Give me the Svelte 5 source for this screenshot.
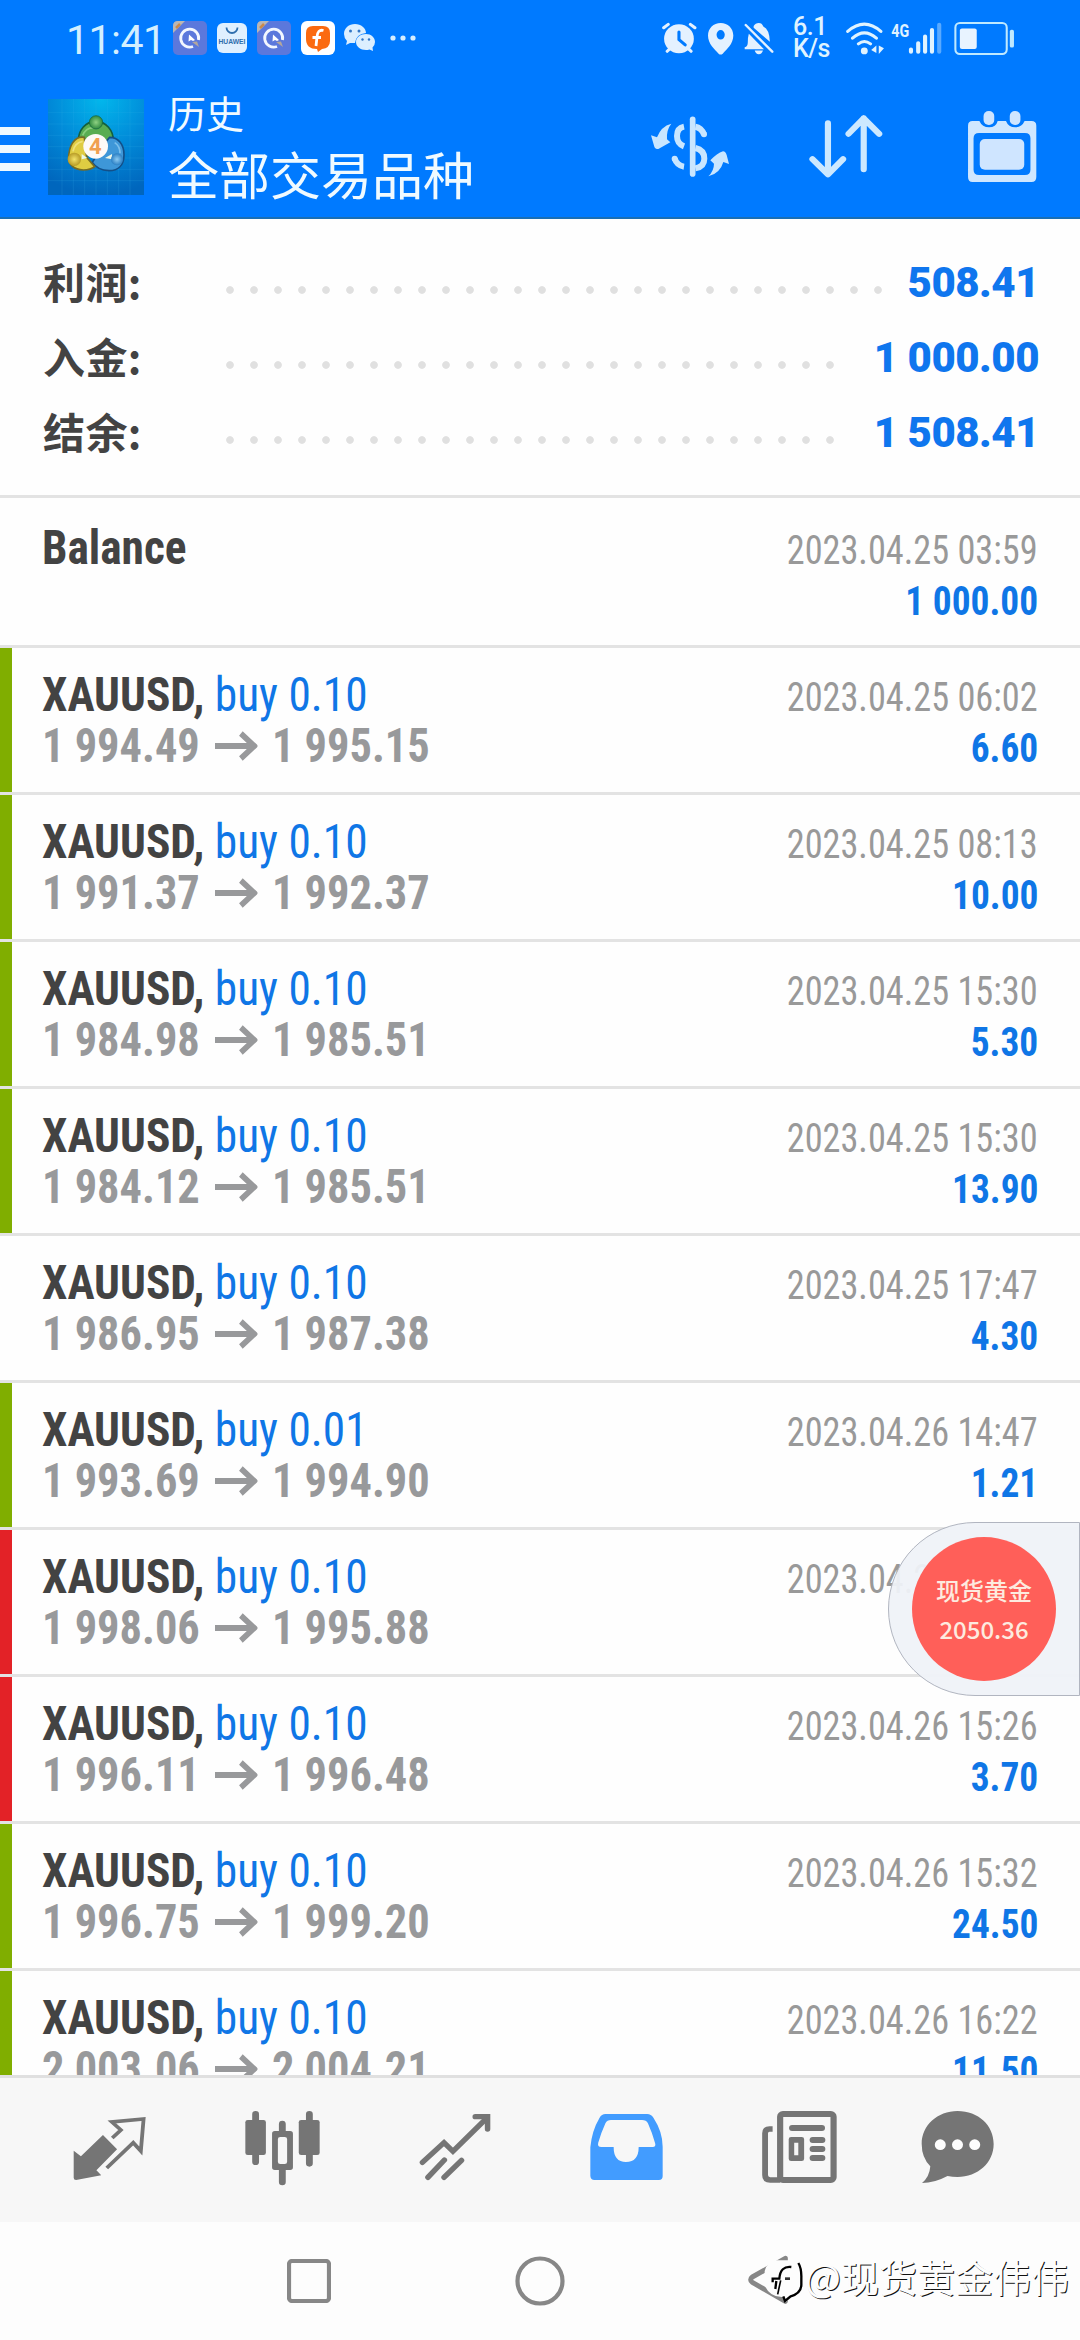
<script lang="ts">
  type Deal = { open: string; close: string; lot: string; time: string; profit: string; mark: string };

  const summary = [
    { label: '利润', value: '508.41', dots: 28 },
    { label: '入金', value: '1 000.00', dots: 26 },
    { label: '结余', value: '1 508.41', dots: 26 },
  ];

  const deals: Deal[] = [
    { open: '1 994.49', close: '1 995.15', lot: '0.10', time: '2023.04.25 06:02', profit: '6.60', mark: 'green' },
    { open: '1 991.37', close: '1 992.37', lot: '0.10', time: '2023.04.25 08:13', profit: '10.00', mark: 'green' },
    { open: '1 984.98', close: '1 985.51', lot: '0.10', time: '2023.04.25 15:30', profit: '5.30', mark: 'green' },
    { open: '1 984.12', close: '1 985.51', lot: '0.10', time: '2023.04.25 15:30', profit: '13.90', mark: 'green' },
    { open: '1 986.95', close: '1 987.38', lot: '0.10', time: '2023.04.25 17:47', profit: '4.30', mark: 'none' },
    { open: '1 993.69', close: '1 994.90', lot: '0.01', time: '2023.04.26 14:47', profit: '1.21', mark: 'green' },
    { open: '1 998.06', close: '1 995.88', lot: '0.10', time: '2023.04.26 15:24', profit: '', mark: 'red' },
    { open: '1 996.11', close: '1 996.48', lot: '0.10', time: '2023.04.26 15:26', profit: '3.70', mark: 'red' },
    { open: '1 996.75', close: '1 999.20', lot: '0.10', time: '2023.04.26 15:32', profit: '24.50', mark: 'green' },
    { open: '2 003.06', close: '2 004.21', lot: '0.10', time: '2023.04.26 16:22', profit: '11.50', mark: 'green' },
  ];
</script>

{#snippet rocketApp()}
  <svg class="app" width="34" height="34" viewBox="0 0 34 34">
    <rect width="34" height="34" rx="5" fill="#5b78dc" />
    <path d="M0 12V5Q0 0 5 0H12Z" fill="#b9b6b4" />
    <path d="M3 7L7 3" stroke="#c98a4b" stroke-width="2.5" />
    <path d="M20 25.5A9 9 0 1 1 25.500 19" fill="none" stroke="#f2f7ff" stroke-width="2.800" />
    <path d="M16 13.500L22 19L20 20L18 19L15.500 20.500Z" fill="#fff" />
    <path d="M19 21L24 20.500L26 26Z" fill="#b3a69c" />
  </svg>
{/snippet}

<div class="screen">
  <header>
    <div class="statusbar">
      <span class="clock">11:41</span>
      {@render rocketApp()}
      <svg class="app" width="30" height="30" viewBox="0 0 30 30">
        <rect width="30" height="30" rx="6" fill="#dff0ff" />
        <path d="M9.500 4.500A5.500 5.500 0 0 0 20.500 4.500" fill="none" stroke="#2f6fae" stroke-width="1.800" />
        <text x="15" y="20.500" text-anchor="middle" textLength="27" lengthAdjust="spacingAndGlyphs" class="brand">HUAWEI</text>
      </svg>
      {@render rocketApp()}
      <svg class="app" width="34" height="34" viewBox="0 0 34 34">
        <rect width="34" height="34" rx="6" fill="#fff" />
        <path d="M12 5H22Q29 5 29 12V20Q29 27 21 28L17 31L16 28Q5 28 5 18V12Q5 5 12 5Z" fill="#fb6a10" />
        <path d="M22.500 9.500Q16.500 8 16 16L15 25M11.500 16.500H20" fill="none" stroke="#fff" stroke-width="2.800" />
      </svg>
      <svg class="chat" width="32" height="28" viewBox="0 0 32 28">
        <path d="M11 0C17 0 22 4 22 9Q12 10 11 19L6 19L2 21L3 17Q0 14 0 10C0 4 5 0 11 0Z" fill="#dcefff" />
        <path d="M22 10C27 10 31 13.500 31 18Q31 21 28.500 23.500L29 27L25.500 25.500Q23.500 26 22 26C16.500 26 12 22.500 12 18C12 13.500 16.500 10 22 10Z" fill="#dcefff" />
        <g fill="#3477c4">
          <circle cx="6.500" cy="7" r="1.500" /><circle cx="15" cy="7" r="1.500" />
          <circle cx="18.500" cy="15.500" r="1.200" /><circle cx="25" cy="15.500" r="1.200" />
        </g>
      </svg>
      <svg class="more" width="26" height="6" viewBox="0 0 26 6" fill="#d6eeff">
        <circle cx="3" cy="3" r="2.600" /><circle cx="13" cy="3" r="2.600" /><circle cx="23" cy="3" r="2.600" />
      </svg>

      <svg class="alarm" width="36" height="33" viewBox="351 63 104 98" preserveAspectRatio="none">
        <circle cx="400" cy="113" r="43" fill="#e4f1ff" />
        <path d="M356 80L369 70M446 80L433 70M366 150L374 142M435 150L427 142" stroke="#e4f1ff" stroke-width="9" stroke-linecap="round" />
        <path d="M400 93V115L418 131" fill="none" stroke="#007aff" stroke-width="9" stroke-linecap="round" />
      </svg>
      <svg class="pin" width="26" height="33" viewBox="484 63 76 98" preserveAspectRatio="none">
        <path d="M521 66C542 66 558 82 558 103C558 128 538 145 527 157Q521 162 515 157C504 145 484 128 484 103C484 82 500 66 521 66ZM521 87A12 14 0 1 0 521 115A12 14 0 1 0 521 87Z" fill="#e4f1ff" fill-rule="evenodd" />
      </svg>
      <svg class="bell" width="30" height="33" viewBox="593 63 87 98" preserveAspectRatio="none" fill="#e4f1ff">
        <path d="M621 75Q626 66 636 66Q645 66 649 76Q667 84 668 122L621 80Z" />
        <path d="M607 98L651 144H595V138Q604 136 604 124Q604 108 607 98ZM624 148H648Q645 159 636 159Q627 159 624 148Z" />
        <path d="M598 72L675 151" stroke="#e4f1ff" stroke-width="7" stroke-linecap="round" />
      </svg>
      <div class="speed"><span>6.1</span><span>K/s</span></div>
      <svg class="wifi" width="39" height="34" viewBox="888 60 113 101" preserveAspectRatio="none">
        <g fill="none" stroke="#e0f3ff" stroke-width="9" stroke-linecap="round">
          <path d="M893 91Q941 48 989 91M907 111Q941 80 976 111M924 128Q941 114 959 128" />
        </g>
        <circle cx="941" cy="149" r="10" fill="#e0f3ff" />
        <path d="M961 146L976 133V155ZM983 133L998 141L983 158Z" fill="#e0f3ff" />
      </svg>
      <svg class="signal" width="52" height="34" viewBox="1019 60 151 101" preserveAspectRatio="none">
        <text x="1020" y="107" textLength="52" lengthAdjust="spacingAndGlyphs" class="net">4G</text>
        <g stroke="#e0f3ff" stroke-width="12" stroke-linecap="round">
          <path d="M1077 145V151M1098 126V151M1118 106V151M1138 87V151" />
          <path d="M1159 71V151" opacity=".4" />
        </g>
      </svg>
      <svg class="battery" width="61" height="34" viewBox="1200 60 177 101" preserveAspectRatio="none">
        <rect x="1204" y="66" width="149" height="92" rx="13" fill="none" stroke="#bfe9ff" stroke-width="6" />
        <rect x="1217" y="82" width="49" height="61" rx="6" fill="#e8f3ff" />
        <rect x="1362" y="86" width="12" height="53" rx="5" fill="#bfe9ff" />
      </svg>
    </div>

    <div class="toolbar">
      <svg class="menu" width="30" height="44" viewBox="0 0 30 44" fill="#eef9ff">
        <rect width="30" height="8" /><rect y="18" width="30" height="8" /><rect y="36" width="30" height="8" />
      </svg>
      <svg class="logo" width="96" height="96" viewBox="12 15 288 288">
        <defs>
          <radialGradient id="sky" cx=".55" cy="0" r="1">
            <stop offset="0" stop-color="#02b7ec" />
            <stop offset=".5" stop-color="#018bd9" />
            <stop offset="1" stop-color="#0066bd" />
          </radialGradient>
          <radialGradient id="gold"><stop offset="0" stop-color="#f3e36a" /><stop offset="1" stop-color="#b79a25" /></radialGradient>
          <radialGradient id="leaf"><stop offset="0" stop-color="#8fd183" /><stop offset="1" stop-color="#2f8a3f" /></radialGradient>
          <radialGradient id="sea"><stop offset="0" stop-color="#8ccbf2" /><stop offset="1" stop-color="#2b7fc4" /></radialGradient>
        </defs>
        <rect x="12" y="15" width="288" height="288" fill="url(#sky)" />
        <path d="M54 15V303M88 15V303M122 15V303M156 15V303M190 15V303M224 15V303M258 15V303M12 56H300M12 90H300M12 124H300M12 158H300M12 192H300M12 226H300M12 260H300" stroke="#3db4ee" stroke-opacity=".25" stroke-width="2" />
        <g stroke-width="5">
          <path d="M155 82C187 82 208 110 208 140Q208 165 190 185H120Q103 162 103 140C103 110 124 82 155 82Z" fill="#58ad52" stroke="#14603f" />
          <path d="M197 130C222 130 240 150 240 182C240 214 222 230 195 230Q160 228 145 205L180 150Z" fill="#3e97d8" stroke="#134f88" />
          <path d="M121 130Q100 126 86 146Q74 165 74 192C74 214 92 226 118 228Q140 228 152 218L128 190Z" fill="#dfcc42" stroke="#766c25" />
        </g>
        <g fill="none" stroke-width="5" stroke-opacity=".6">
          <path d="M116 124Q128 98 150 102" stroke="#a9e39a" />
          <path d="M212 146Q228 156 228 178" stroke="#a4d8f8" />
          <path d="M87 172Q92 146 116 142" stroke="#f9f0a0" />
        </g>
        <path d="M113 180L130 192L113 196ZM183 192L204 180V196Z" fill="#eaf6e8" />
        <circle cx="156" cy="85" r="20" fill="url(#leaf)" stroke="#14603f" stroke-width="2" />
        <circle cx="91" cy="196" r="20" fill="url(#gold)" />
        <circle cx="219" cy="196" r="18" fill="url(#sea)" />
        <circle cx="155" cy="157" r="37" fill="#fdfaf7" />
        <text x="154" y="181" text-anchor="middle" class="four">4</text>
      </svg>
      <div class="titles">
        <span class="section">历史</span>
        <span class="symbols">全部交易品种</span>
      </div>
      <svg class="currency" width="80" height="64" viewBox="30 40 240 192" fill="#c9e6ff">
        <path d="M94 66Q79 84 81 113L91 122L55 142Q45 142 43 135L33 101L51 107Q63 74 94 66Z" />
        <path d="M205 224Q222 207 222 186L211 176Q231 155 249 149Q257 150 260 160L267 187L250 181Q240 216 205 224Z" />
        <g fill="none" stroke="#c9e6ff" stroke-width="18">
          <path d="M132 75Q111 79 111 103Q111 126 132 134" />
          <path d="M166 139Q193 145 193 171Q193 195 166 200" />
        </g>
        <path d="M132 195Q111 192 104 171M166 75Q184 78 192 98" fill="none" stroke="#c9e6ff" stroke-width="18" />
        <circle cx="104" cy="171" r="9" /><circle cx="192" cy="98" r="9" />
        <path d="M158 53V217" stroke="#c9e6ff" stroke-width="17" stroke-linecap="round" />
      </svg>
      <svg class="sort" width="76" height="66" viewBox="779 343 221 197" preserveAspectRatio="none">
        <path d="M837 371V520M792 478L837 523L881 478M941 508V356M897 402L941 356L986 402" fill="none" stroke="#cce8ff" stroke-width="18" stroke-linecap="round" stroke-linejoin="round" />
      </svg>
      <svg class="calendar" width="70" height="73" viewBox="1240 329 203 219" preserveAspectRatio="none">
        <path d="M1256 362H1276Q1284 381 1304 381Q1324 381 1329 362H1353Q1360 381 1380 381Q1399 381 1407 362H1427Q1441 362 1441 376V530Q1441 545 1427 545H1256Q1243 545 1243 530V376Q1243 362 1256 362ZM1275 398Q1259 398 1259 414V508Q1259 524 1275 524H1408Q1424 524 1424 508V414Q1424 398 1408 398Z" fill="#cfe7ff" fill-rule="evenodd" />
        <rect x="1277" y="416" width="129" height="92" rx="15" fill="#cfe5ff" />
        <rect x="1285" y="329" width="37" height="50" rx="18" fill="#007aff" />
        <rect x="1361" y="329" width="37" height="50" rx="18" fill="#007aff" />
        <rect x="1288" y="332" width="31" height="42" rx="15" fill="#cfe5ff" />
        <rect x="1364" y="332" width="31" height="42" rx="15" fill="#cfe5ff" />
      </svg>
    </div>
  </header>

  <main>
    <section class="summary">
      {#each summary as item}
        <div class="total">
          <span class="label">{item.label}:</span>
          <i class="leader" style="width: {item.dots * 24}px"></i>
          <strong>{item.value}</strong>
        </div>
      {/each}
    </section>

    <div class="row balance">
      <div class="left"><span class="symbol"><b>Balance</b></span></div>
      <div class="right">
        <span class="time">2023.04.25 03:59</span>
        <span class="profit">1 000.00</span>
      </div>
    </div>

    {#each deals as deal}
      <div class="row {deal.mark}">
        <div class="left">
          <span class="symbol"><b>XAUUSD,</b> <em>buy {deal.lot}</em></span>
          <span class="prices">
            {deal.open}
            <svg width="46" height="30" viewBox="0 0 46 30"><path d="M0 15H42M28 2.500L42.500 15L28 27.500" fill="none" stroke="#98999b" stroke-width="6" /></svg>
            {deal.close}
          </span>
        </div>
        <div class="right">
          <span class="time">{deal.time}</span>
          <span class="profit">{deal.profit}</span>
        </div>
      </div>
    {/each}
  </main>

  <nav class="tabs">
    <svg width="73" height="76" viewBox="213 150 212 228" preserveAspectRatio="none">
      <path d="M300 225L341 268L281 331L295 346L222 360Q215 360 215 353V272L236 289Z" fill="#757575" />
      <path d="M327 234L352 210L326 186L418 177L410 273L388 248L311 324" fill="none" stroke="#757575" stroke-width="11" />
    </svg>
    <svg width="75" height="76" viewBox="708 150 219 228" preserveAspectRatio="none" fill="#757575">
      <path d="M739 163V305M896 163V310M817 192V220M817 325V366" stroke="#757575" stroke-width="20" stroke-linecap="round" />
      <rect x="709" y="180" width="60" height="105" rx="7" /><rect x="865" y="180" width="61" height="105" rx="7" />
      <path d="M795 213H840Q848 213 848 221V322Q848 330 840 330H795Q787 330 787 322V221Q787 213 795 213ZM811 231Q804 231 804 238V305Q804 312 811 312H824Q831 312 831 305V238Q831 231 824 231Z" fill-rule="evenodd" />
    </svg>
    <svg width="72" height="76" viewBox="1212 150 210 228" preserveAspectRatio="none" fill="none" stroke="#757575" stroke-linecap="round">
      <path d="M1222 307L1285 248L1311 274L1408 176M1238 352L1286 300M1285 352L1336 301" stroke-width="16" stroke-linejoin="miter" />
      <path d="M1376 170H1412V207" stroke-width="16" />
    </svg>
    <svg width="73" height="76" viewBox="145 150 213 228" preserveAspectRatio="none">
      <path d="M190 162H312Q323 162 330 173Q357 215 357 260V349Q357 360 346 360H158Q147 360 146 348V262Q150 213 173 173Q179 162 190 162ZM206 180Q195 180 190 190Q178 217 169 248Q166 261 178 261H214Q214 306 250 306Q287 306 287 261H328Q338 261 335 250Q326 217 314 190Q309 180 297 180Z" fill="#429cff" fill-rule="evenodd" />
    </svg>
    <svg width="75" height="76" viewBox="646 150 219 228" preserveAspectRatio="none">
      <rect x="699" y="162" width="156" height="198" rx="8" fill="none" stroke="#757575" stroke-width="18" />
      <path d="M677 207H668Q655 207 655 220V345Q655 360 670 360H699" fill="none" stroke="#757575" stroke-width="17" />
      <g fill="#757575">
        <rect x="725" y="195" width="105" height="18" rx="9" />
        <path d="M731 231H762Q769 231 769 238V296Q769 303 762 303H731Q724 303 724 296V238Q724 231 731 231ZM740 248V286H752V248Z" fill-rule="evenodd" />
        <rect x="785" y="231" width="46" height="18" rx="9" /><rect x="785" y="258" width="46" height="18" rx="9" /><rect x="785" y="285" width="46" height="18" rx="9" />
      </g>
    </svg>
    <svg class="messages" width="73" height="76" viewBox="1107 150 212 228" preserveAspectRatio="none">
      <path d="M1213 153C1274 153 1318 196 1318 252C1318 308 1272 351 1213 351Q1198 351 1184 348Q1146 369 1110 369Q1132 350 1134 319Q1109 293 1109 252C1109 196 1155 153 1213 153Z" fill="#757575" />
      <g fill="#fdfdfd"><circle cx="1163" cy="254" r="16" /><circle cx="1213" cy="254" r="16" /><circle cx="1263" cy="254" r="16" /></g>
    </svg>
  </nav>

  <footer>
    <svg width="44" height="44" viewBox="0 0 44 44"><rect x="2" y="2" width="40" height="40" rx="3" fill="none" stroke="#878787" stroke-width="4.200" /></svg>
    <svg class="home" width="50" height="50" viewBox="0 0 50 50"><circle cx="25" cy="25" r="22.500" fill="none" stroke="#878787" stroke-width="4.200" /></svg>
    <svg class="back" width="56" height="60" viewBox="20 45 168 180">
      <path d="M135 58L36 114Q26 122 36 130L135 187Z" fill="none" stroke="#878787" stroke-width="15" stroke-linejoin="round" />
      <path d="M108 64H162Q186 72 186 100V135Q184 165 152 176L136 190L128 174Q90 176 73 140V96Q82 66 108 64Z" fill="#fdfdfd" />
      <path d="M174 72Q184 88 183 118V138Q182 163 151 172L134 186L129 172" fill="none" stroke="#000" stroke-width="7" />
      <path d="M153 84Q120 80 117 119H97V130M108 126L105 150" fill="none" stroke="#000" stroke-width="7" />
      <path d="M121 124L112 166" stroke="#000" stroke-width="5" />
      <path d="M134 119H149" stroke="#333" stroke-width="8" />
    </svg>
    <span class="watermark">@现货黄金伟伟</span>
  </footer>

  <aside class="ticker">
    <div class="quote"><span>现货黄金</span><span>2050.36</span></div>
  </aside>
</div>

<style>
  :global(body) {
    background: #fff;
  }

  .screen {
    position: relative;
    display: flex;
    flex-direction: column;
    width: 1080px;
    height: 2340px;
    overflow: hidden;
    background: #fefefe;
    font-family: Roboto, 'Noto Sans CJK SC', sans-serif;
  }

  svg {
    flex: none;
    display: block;
  }

  header {
    height: 219px;
    box-sizing: border-box;
    flex: none;
    border-bottom: 2px solid #1a6fb4;
    background: #007aff;
    color: #f0faff;
  }

  .statusbar {
    display: flex;
    align-items: center;
    height: 76px;
    padding: 0 65px 0 66px;
  }

  .clock {
    width: 97px;
    margin-top: 4px;
    font-size: 41px;
    letter-spacing: -0.5px;
    color: #d3efff;
    white-space: nowrap;
  }

  .app {
    margin-left: 10px;
  }

  .chat {
    margin-left: 9px;
  }

  .more {
    margin-left: 14px;
  }

  .brand {
    font: bold 7px 'Liberation Sans', sans-serif;
    fill: #2f6fae;
  }

  .alarm {
    margin-left: auto;
  }

  .pin,
  .bell {
    margin-left: 10px;
  }

  .speed {
    display: flex;
    flex-direction: column;
    width: 36px;
    margin-left: 19px;
    font-size: 25px;
    font-weight: 500;
    line-height: 22px;
    letter-spacing: -0.5px;
    color: #dff3ff;
  }

  .wifi {
    margin-left: 17px;
  }

  .signal {
    margin-left: 6px;
    overflow: visible;
  }

  .battery {
    margin-left: 11px;
  }

  .net {
    font: bold 57px Roboto, sans-serif;
    fill: #e0f3ff;
  }

  .toolbar {
    display: flex;
    align-items: center;
    height: 141px;
    padding-right: 43px;
  }

  .menu {
    margin-top: 5px;
  }

  .logo {
    margin-left: 18px;
  }

  .four {
    font: bold 66px Roboto, sans-serif;
    fill: #f0a050;
  }

  .titles {
    display: flex;
    flex-direction: column;
    margin: -3px 0 0 24px;
    font-family: 'Noto Sans CJK SC', sans-serif;
  }

  .section {
    font-size: 38px;
    line-height: 56px;
  }

  .symbols {
    font-size: 51px;
    line-height: 66px;
  }

  .currency {
    margin-left: auto;
  }

  .sort {
    margin-left: 78px;
  }

  .calendar {
    margin-left: 83px;
  }

  main {
    flex: none;
    height: 1856px;
    overflow: hidden;
  }

  .summary {
    height: 276px;
    padding: 26px 41px 0 43px;
    box-sizing: border-box;
  }

  .total {
    display: flex;
    align-items: center;
    height: 75px;
    font-size: 42px;
    font-weight: bold;
  }

  .label {
    width: 175px;
    margin-top: -4px;
    font-family: 'Noto Sans CJK SC', sans-serif;
    letter-spacing: 0.4px;
    color: #434343;
  }

  .leader {
    height: 8px;
    margin-top: 15px;
    background: radial-gradient(circle at 12px 4px, #e0e0e0 3.4px, transparent 4.2px) 0 0 / 24px 8px;
  }

  .total strong {
    margin-left: auto;
    letter-spacing: -0.5px;
    color: #0f76ee;
  }

  .row {
    display: flex;
    justify-content: space-between;
    height: 147px;
    box-sizing: border-box;
    padding: 21px 42px 0;
    border-top: 3px solid #e3e3e3;
    background: linear-gradient(var(--mark, #fefefe), var(--mark, #fefefe)) 0 0 / 12px 100% no-repeat;
    font-stretch: 75%;
    font-size: 48px;
    line-height: 51px;
    white-space: nowrap;
  }

  .balance {
    height: 150px;
    padding-top: 24px;
  }

  .green {
    --mark: #80ae00;
  }

  .red {
    --mark: #e32227;
  }

  .left,
  .right {
    display: flex;
    flex-direction: column;
  }

  .right {
    align-items: flex-end;
    padding-top: 3px;
    font-size: 40px;
  }

  b {
    color: #434343;
  }

  em {
    font-style: normal;
    color: #0f76e6;
  }

  .symbol {
    transform: scaleX(0.945);
    transform-origin: left;
  }

  .prices {
    display: flex;
    align-items: center;
    gap: 16px;
    transform: scaleX(0.925);
    transform-origin: left;
    font-weight: bold;
    color: #98999b;
  }

  .time {
    transform: scaleX(0.907);
    transform-origin: right;
    color: #999;
  }

  .profit {
    transform: scaleX(0.935);
    transform-origin: right;
    font-weight: bold;
    color: #0f76e6;
  }

  .tabs {
    display: flex;
    gap: 99px;
    flex: none;
    height: 147px;
    box-sizing: border-box;
    padding: 32px 0 0 73px;
    border-top: 3px solid #e0e0e0;
    background: #f7f7f7;
  }

  .messages {
    margin-left: -15px;
  }

  footer {
    display: flex;
    align-items: center;
    flex: 1;
    padding: 0 0 1px 287px;
    background: #fdfdfd;
  }

  .home {
    margin-left: 184px;
  }

  .back {
    margin: 7px 0 0 182px;
  }

  .watermark {
    margin: -10px 0 0 2px;
    font: 38px 'Noto Sans CJK SC', sans-serif;
    color: #fdfdfd;
    text-shadow: 1px 1px 0 #111;
    white-space: nowrap;
  }

  /* floating quote bubble docked to the right edge */
  .ticker {
    position: absolute;
    top: 1522px;
    right: 0;
    display: flex;
    align-items: center;
    justify-content: center;
    width: 192px;
    height: 174px;
    box-sizing: border-box;
    border: 1px solid #b1b5c0;
    border-radius: 87px 0 0 87px;
    background: rgba(239, 242, 248, 0.94);
  }

  .quote {
    display: flex;
    flex-direction: column;
    align-items: center;
    justify-content: center;
    width: 144px;
    height: 144px;
    border-radius: 50%;
    background: #ff5f59;
    font: 500 24px/39px 'Noto Sans CJK SC', sans-serif;
    color: #fdeadf;
  }
</style>
